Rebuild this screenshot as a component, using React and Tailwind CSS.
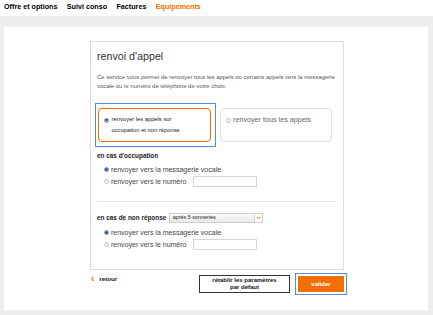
import React from 'react';

function Radio({ checked }) {
  return (
    <span
      className={`flex h-[5px] w-[5px] shrink-0 items-center justify-center rounded-full border ${
        checked ? 'border-[#7d93ad] bg-[#c9d8ea]' : 'border-[#c4c4c4] bg-[#f2f2f2]'
      }`}
    >
      {checked && <span className="h-[2.5px] w-[2.5px] rounded-full bg-[#2f5f96]" />}
    </span>
  );
}

function ChoiceRow({ checked, label, withInput }) {
  return (
    <div className="flex h-[12px] items-center pl-[7px]">
      <Radio checked={checked} />
      <span className="ml-[2px] whitespace-nowrap text-[7px] leading-none text-[#444]">{label}</span>
      {withInput && <div className="ml-[7px] h-[11px] w-[64px] border border-[#d6d6d6] bg-white" />}
    </div>
  );
}

export default function App() {
  const tabs = ['Offre et options', 'Suivi conso', 'Factures'];

  return (
    <div className="h-[315px] w-[433px] overflow-hidden bg-[#eeeeee] font-['Liberation_Sans',Arial,sans-serif]">
      {/* Top nav */}
      <div className="flex h-[16px] items-center gap-[9.3px] bg-white px-[4px] pb-[1px]">
        {tabs.map((t) => (
          <span key={t} className="whitespace-nowrap text-[7.2px] font-bold text-black">{t}</span>
        ))}
        <span className="whitespace-nowrap text-[7.2px] font-bold text-[#f16e00]">Equipements</span>
      </div>

      {/* Panel */}
      <div className="ml-[4px] mt-[11px] h-[283px] w-[424px] bg-white pt-[14px]">
        <div className="ml-[86px] w-[254px]">
          {/* Card */}
          <div className="h-[229px] border border-[#dcdcdc] px-[6px] pt-[8px]">
            <h1 className="text-[10.7px] leading-[12px] text-[#333]">renvoi d'appel</h1>
            <p className="mt-[11px] whitespace-nowrap text-[5.95px] leading-[9px] text-[#555]">
              Ce service vous permet de renvoyer tous les appels ou certains appels vers la messagerie
              <br />
              vocale ou le numéro de téléphone de votre choix.
            </p>

            {/* Options */}
            <div className="ml-[-2px] mt-[12px] flex items-start">
              <div className="border border-[#4d8fe6] pb-[4px] pl-[2px] pr-[4px] pt-[4px]">
                <div className="flex h-[34px] w-[113px] items-start rounded-[4px] border border-[#f16e00] pl-[5px] pt-[5px] leading-none">
                  <span className="mt-[3.5px] flex"><Radio checked /></span>
                  <span className="ml-[2.5px] text-[5.8px] leading-[11px] text-[#1a1a1a]">
                    renvoyer les appels sur
                    <br />
                    occupation et non réponse
                  </span>
                </div>
              </div>
              <div className="ml-[4px] mt-[5px] flex h-[34px] w-[112px] items-start rounded-[4px] border border-[#dedede] pl-[5px] pt-[7px] leading-none">
                <span className="mt-[1.5px] flex"><Radio /></span>
                <span className="ml-[2px] whitespace-nowrap text-[7.2px] leading-[8px] text-[#666]">renvoyer tous les appels</span>
              </div>
            </div>

            {/* en cas d'occupation */}
            <div className="mt-[5px] text-[6.4px] font-bold leading-[8px] text-[#222]">en cas d'occupation</div>
            <div className="mt-[3.5px]">
              <ChoiceRow checked label="renvoyer vers la messagerie vocale" />
              <ChoiceRow label="renvoyer vers le numéro" withInput />
            </div>

            <div className="mt-[13.5px] h-px bg-[#e2e2e2]" />

            {/* en cas de non réponse */}
            <div className="mt-[11px] flex h-[10px] items-center">
              <span className="whitespace-nowrap text-[6.4px] font-bold leading-none text-[#222]">en cas de non réponse</span>
              <div className="ml-[2.5px] flex h-[10px] w-[94px] items-center border border-[#cfcfcf] bg-gradient-to-b from-[#fafafa] to-[#e8e8e8]">
                <span className="flex-1 pl-[3px] text-[5.4px] leading-none text-[#222]">après 5 sonneries</span>
                <span className="flex h-full w-[8px] items-center justify-center border-l border-[#d6d6d6] bg-white">
                  <svg width="5" height="4" viewBox="0 0 5 4">
                    <path d="M0.8 1 L2.5 2.8 L4.2 1" fill="none" stroke="#f16e00" strokeWidth="1" />
                  </svg>
                </span>
              </div>
            </div>
            <div className="mt-[3.5px]">
              <ChoiceRow checked label="renvoyer vers la messagerie vocale" />
              <ChoiceRow label="renvoyer vers le numéro" withInput />
            </div>
          </div>

          {/* Bottom actions */}
          <div className="mt-[5px] flex items-start justify-between">
            <div className="ml-[1px] flex items-center">
              <span className="text-[10px] font-bold leading-[8px] text-[#f16e00]">‹</span>
              <span className="ml-[5px] text-[6.2px] font-bold leading-[8px] text-[#111]">retour</span>
            </div>
            <div className="flex items-center">
              <button className="flex h-[18px] w-[91px] flex-col items-center justify-center border-[1.5px] border-[#333] bg-white text-[6px] font-bold leading-[7px] text-[#111]">
                <span>rétablir les paramètres</span>
                <span>par défaut</span>
              </button>
              <button className="ml-[8px] h-[16px] w-[46px] bg-[#f16e00] text-[6px] font-bold text-white outline outline-1 outline-offset-2 outline-[#4d8fe6]">
                valider
              </button>
            </div>
          </div>
        </div>
      </div>
    </div>
  );
}
